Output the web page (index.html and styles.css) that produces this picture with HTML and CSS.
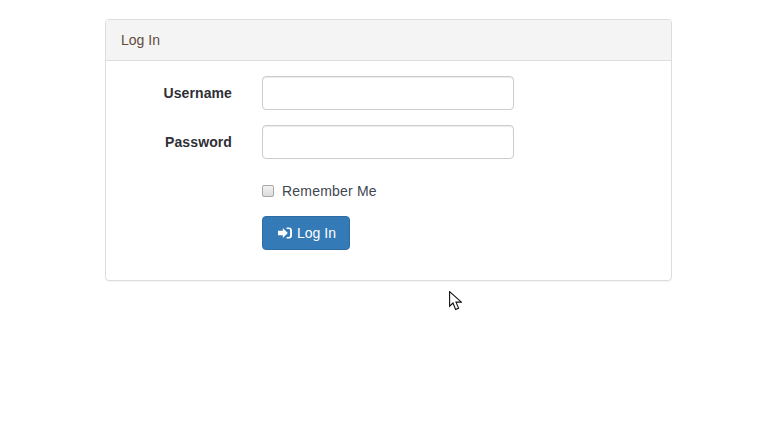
FILE: index.html
```html
<!DOCTYPE html>
<html lang="en">
<head>
<meta charset="utf-8">
<title>Log In</title>
<link rel="stylesheet" href="styles.css">
</head>
<body>
<div class="panel">
  <div class="panel-heading">Log In</div>
  <form class="panel-body">
    <div class="form-row">
      <label class="field-label" for="username">Username</label>
      <input class="field-input" id="username" type="text">
    </div>
    <div class="form-row">
      <label class="field-label" for="password">Password</label>
      <input class="field-input" id="password" type="password">
    </div>
    <div class="form-row remember-row">
      <label class="remember"><span class="check"></span>Remember Me</label>
    </div>
    <div class="form-row button-row">
      <button class="btn" type="button">
        <svg class="btn-icon" viewBox="0 0 14 12" width="14" height="12" aria-hidden="true">
          <path fill="#fff" d="M0 3.8h4.8V1L9.8 6l-5 5V8.2H0z"/>
          <path fill="#fff" d="M8.6.4h2.4C12.7.4 14 1.7 14 3.4v5.2c0 1.7-1.3 3-3 3H8.6V9.9h2.2c.8 0 1.3-.6 1.3-1.3V3.4c0-.7-.5-1.3-1.3-1.3H8.6z"/>
        </svg>Log In</button>
    </div>
  </form>
</div>
<svg class="cursor" viewBox="0 0 13 20" width="13" height="20" aria-hidden="true">
  <path fill="#fff" stroke="#111" stroke-width="1.1" d="M.6.6v14.6l3.4-3.2 2.6 6.4 3-1.3-2.6-6h5.4z"/>
</svg>
</body>
</html>
```
FILE: styles.css
```css
* { box-sizing: border-box; }
html, body { margin: 0; height: 100%; }
body {
  position: relative;
  padding: 19px 0 0 105px;
  background: #fff;
  color: #333;
  font-family: "Liberation Sans", Arial, sans-serif;
  font-size: 14px;
  line-height: 20px;
  overflow: hidden;
}
.panel {
  width: 567px;
  height: 262px;
  border: 1px solid #ddd;
  border-radius: 4px;
  box-shadow: 0 1px 1px rgba(0, 0, 0, .05);
}
.panel-heading {
  height: 41px;
  padding: 10px 15px;
  background: #f4f4f4;
  border-bottom: 1px solid #ddd;
  border-radius: 3px 3px 0 0;
  color: #5f4b3c;
}
.panel-body { padding: 15px 15px 0; }
.form-row {
  display: flex;
  align-items: center;
  gap: 30px;
  margin-bottom: 15px;
}
.field-label {
  width: 111px;
  text-align: right;
  font-weight: 700;
  letter-spacing: .1px;
  color: #2f2f38;
}
.field-input {
  width: 252px;
  height: 34px;
  padding: 6px 12px;
  border: 1px solid #ccc;
  border-radius: 4px;
  background: #fff;
  box-shadow: inset 0 1px 1px rgba(0, 0, 0, .075);
}
.remember-row, .button-row { padding-left: 141px; }
.remember-row { margin: 22px 0 15px; }
.remember { display: flex; align-items: center; letter-spacing: .2px; color: #3f4750; }
.check {
  width: 12px;
  height: 12px;
  margin-right: 8px;
  border: 1px solid #a8a8a8;
  border-radius: 2px;
  background: linear-gradient(#f2f2f2, #dcdcdc);
}
.btn {
  display: flex;
  align-items: center;
  height: 34px;
  width: 88px;
  padding: 6px 0 6px 15px;
  border: 1px solid #2e6da4;
  border-radius: 4px;
  background: #337ab7;
  color: #fff;
  font: inherit;
}
.btn-icon { margin-right: 5px; }
.cursor { position: absolute; left: 449px; top: 291px; }
```
